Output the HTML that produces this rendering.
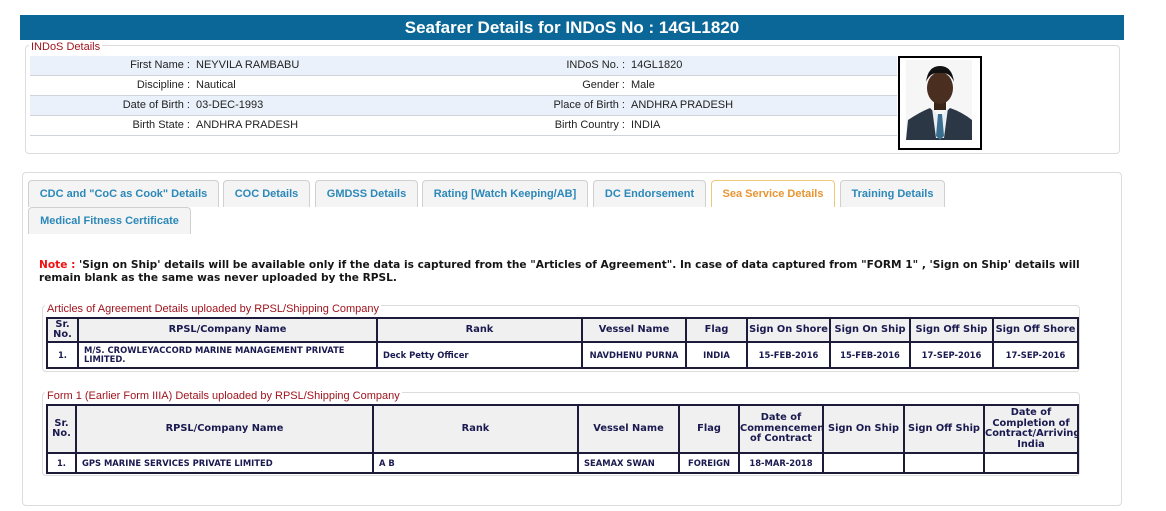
<!DOCTYPE html>
<html><head><meta charset="utf-8"><style>
*{box-sizing:border-box;margin:0;padding:0}
body{width:1166px;height:511px;background:#fff;position:relative;overflow:hidden;font-family:"Liberation Sans",Arial,sans-serif}
.abs{position:absolute}
.title{left:20px;top:15px;width:1104px;height:25px;background:#0b6797;color:#fff;font-weight:bold;font-size:17px;text-align:center;line-height:25px}
.box{border:1px solid #dcdcdc;border-radius:4px}
.leg{background:#fff;color:#a0141e;font-size:11px;padding:0 2px;line-height:12px}
.row{left:30px;width:867px;height:20px;border-bottom:1px solid #cfd4da;font-size:11px;color:#222;line-height:19px}
.row.a{background:#eaf1fa}
.row span{position:absolute}
.tab{height:27px;border:1px solid #d0d0d0;border-bottom:none;border-radius:4px 4px 0 0;background:#f4f4f4;color:#2b88b9;font-size:11px;font-weight:bold;text-align:center;line-height:26px}
.tab.act{background:#fff;border-color:#efc97a;color:#e89532}
.note{left:39px;top:259px;width:1065px;font-family:"DejaVu Sans",Verdana,sans-serif;font-weight:bold;font-size:10.6px;line-height:13px;color:#161616}
table{position:absolute;border-collapse:collapse;font-family:"DejaVu Sans",Verdana,sans-serif;color:#1a1a50;table-layout:fixed}
td,th{border:2px solid #1c1c3a;text-align:center;overflow:hidden}
th{background:#f0f0f0;font-size:9.8px;font-weight:bold;line-height:10.5px}
td{font-size:8.4px;font-weight:bold;line-height:9px}
td.lft{text-align:left;padding-left:5px}
</style></head><body>
<div class="abs title">Seafarer Details for INDoS No : 14GL1820</div>

<div class="abs box" style="left:25px;top:45px;width:1095px;height:109px"></div>
<div class="abs leg" style="left:29px;top:41px">INDoS Details</div>
<div class="abs row a" style="top:56px"><span style="left:0;width:160px;text-align:right">First Name :</span><span style="left:166px">NEYVILA RAMBABU</span><span style="left:400px;width:195px;text-align:right">INDoS No. :</span><span style="left:601px">14GL1820</span></div>
<div class="abs row" style="top:76px"><span style="left:0;width:160px;text-align:right">Discipline :</span><span style="left:166px">Nautical</span><span style="left:400px;width:195px;text-align:right">Gender :</span><span style="left:601px">Male</span></div>
<div class="abs row a" style="top:96px"><span style="left:0;width:160px;text-align:right">Date of Birth :</span><span style="left:166px">03-DEC-1993</span><span style="left:400px;width:195px;text-align:right">Place of Birth :</span><span style="left:601px">ANDHRA PRADESH</span></div>
<div class="abs row" style="top:116px"><span style="left:0;width:160px;text-align:right">Birth State :</span><span style="left:166px">ANDHRA PRADESH</span><span style="left:400px;width:195px;text-align:right">Birth Country :</span><span style="left:601px">INDIA</span></div>

<div class="abs" style="left:898px;top:56px;width:84px;height:94px;border:2px solid #000;background:#fff;overflow:hidden">
<svg width="80" height="90" viewBox="0 0 80 90">
<rect x="6" y="2" width="66" height="80" fill="#f6f6f6"/>
<path d="M6 82 L8 62 Q20 54 30 50 L40 60 L50 50 Q62 54 72 62 L72 82 Z" fill="#2c3746"/>
<path d="M32 50 L40 60 L48 50 L44 80 L36 80 Z" fill="#e8eef4"/>
<path d="M38 56 L42 56 L44 78 L40 82 L36 78 Z" fill="#3a6f8f"/>
<rect x="34" y="40" width="12" height="12" fill="#3a2418"/>
<ellipse cx="40" cy="30" rx="13" ry="16" fill="#4a2e20"/>
<path d="M26 24 Q28 8 40 8 Q52 8 54 24 Q50 14 40 15 Q30 14 26 24Z" fill="#111"/>
</svg></div>

<div class="abs box" style="left:22px;top:172px;width:1100px;height:334px"></div>
<div class="abs tab" style="left:28px;top:180px;width:191px">CDC and "CoC as Cook" Details</div>
<div class="abs tab" style="left:223px;top:180px;width:87px">COC Details</div>
<div class="abs tab" style="left:315px;top:180px;width:103px">GMDSS Details</div>
<div class="abs tab" style="left:422px;top:180px;width:166px">Rating [Watch Keeping/AB]</div>
<div class="abs tab" style="left:593px;top:180px;width:113px">DC Endorsement</div>
<div class="abs tab act" style="left:711px;top:180px;width:124px">Sea Service Details</div>
<div class="abs tab" style="left:840px;top:180px;width:105px">Training Details</div>
<div class="abs tab" style="left:28px;top:207px;width:163px">Medical Fitness Certificate</div>

<div class="abs note"><span style="color:#f01010">Note :</span> 'Sign on Ship' details will be available only if the data is captured from the "Articles of Agreement". In case of data captured from "FORM 1" , 'Sign on Ship' details will remain blank as the same was never uploaded by the RPSL.</div>

<div class="abs box" style="left:42px;top:305px;width:1038px;height:67px"></div>
<div class="abs leg" style="left:45px;top:303px">Articles of Agreement Details uploaded by RPSL/Shipping Company</div>
<table style="left:46px;top:317px;width:1031px">
<colgroup><col style="width:31px"><col style="width:299px"><col style="width:205px"><col style="width:104px"><col style="width:61px"><col style="width:83px"><col style="width:80px"><col style="width:83px"><col style="width:85px"></colgroup>
<tr style="height:24px"><th>Sr.<br>No.</th><th>RPSL/Company Name</th><th>Rank</th><th>Vessel Name</th><th>Flag</th><th>Sign On Shore</th><th>Sign On Ship</th><th>Sign Off Ship</th><th>Sign Off Shore</th></tr>
<tr style="height:26px"><td>1.</td><td class="lft">M/S. CROWLEYACCORD MARINE MANAGEMENT PRIVATE LIMITED.</td><td class="lft">Deck Petty Officer</td><td>NAVDHENU PURNA</td><td>INDIA</td><td>15-FEB-2016</td><td>15-FEB-2016</td><td>17-SEP-2016</td><td>17-SEP-2016</td></tr>
</table>

<div class="abs box" style="left:42px;top:392px;width:1038px;height:84px"></div>
<div class="abs leg" style="left:45px;top:390px">Form 1 (Earlier Form IIIA) Details uploaded by RPSL/Shipping Company</div>
<table style="left:46px;top:404px;width:1031px">
<colgroup><col style="width:29px"><col style="width:297px"><col style="width:205px"><col style="width:101px"><col style="width:60px"><col style="width:84px"><col style="width:81px"><col style="width:80px"><col style="width:94px"></colgroup>
<tr style="height:48px"><th>Sr.<br>No.</th><th>RPSL/Company Name</th><th>Rank</th><th>Vessel Name</th><th>Flag</th><th>Date of Commencement of Contract</th><th>Sign On Ship</th><th>Sign Off Ship</th><th>Date of Completion of Contract/Arriving India</th></tr>
<tr style="height:20px"><td>1.</td><td class="lft">GPS MARINE SERVICES PRIVATE LIMITED</td><td class="lft">A B</td><td class="lft">SEAMAX SWAN</td><td>FOREIGN</td><td>18-MAR-2018</td><td></td><td></td><td></td></tr>
</table>
</body></html>
